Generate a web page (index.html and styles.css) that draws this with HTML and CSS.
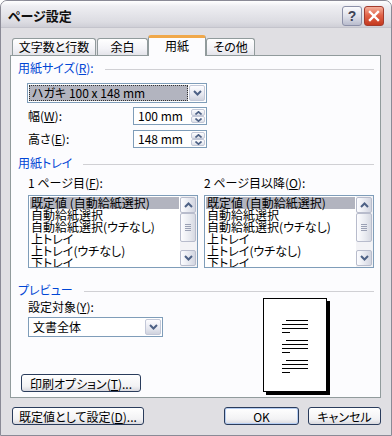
FILE: index.html
```html
<!DOCTYPE html>
<html lang="ja">
<head>
    <meta charset="UTF-8">
    <title>ページ設定</title>
    <link rel="stylesheet" href="styles.css">
</head>
<body>
    <div class="window">
        <div class="titlebar">
            <span class="title">ページ設定</span>
            <div class="title-buttons">
                <span class="tb-btn help">?</span>
                <span class="tb-btn close">
                    <svg width="12" height="12" viewBox="0 0 12 12"><path d="M2 2 L10 10 M10 2 L2 10" stroke="#fff" stroke-width="2.4" stroke-linecap="square"/></svg>
                </span>
            </div>
        </div>

        <div class="client">
            <div class="tabs">
                <div class="tab tab-chars">文字数と行数</div>
                <div class="tab tab-margin">余白</div>
                <div class="tab tab-paper active">用紙</div>
                <div class="tab tab-other">その他</div>
            </div>

            <div class="page">
                <div class="group-title"><span>用紙サイズ(<u>R</u>):</span><i></i></div>

                <div class="combo combo-size">
                    <div class="combo-text selected">ハガキ 100 x 148 mm</div>
                    <div class="drop-btn"><svg width="9" height="6" viewBox="0 0 9 6"><path d="M1 1 L4.5 4.5 L8 1" fill="none" stroke="#4d6185" stroke-width="2"/></svg></div>
                </div>

                <div class="field-row first">
                    <label class="field-label">幅(<u>W</u>):</label>
                    <div class="spin">
                        <div class="spin-value">100 mm</div>
                        <div class="spin-btns">
                            <span class="spin-btn"><svg width="7" height="4" viewBox="0 0 7 4"><path d="M0.5 3.5 L3.5 0.8 L6.5 3.5" fill="none" stroke="#4d6185" stroke-width="1.6"/></svg></span>
                            <span class="spin-btn"><svg width="7" height="4" viewBox="0 0 7 4"><path d="M0.5 0.5 L3.5 3.2 L6.5 0.5" fill="none" stroke="#4d6185" stroke-width="1.6"/></svg></span>
                        </div>
                    </div>
                </div>

                <div class="field-row">
                    <label class="field-label">高さ(<u>E</u>):</label>
                    <div class="spin">
                        <div class="spin-value">148 mm</div>
                        <div class="spin-btns">
                            <span class="spin-btn"><svg width="7" height="4" viewBox="0 0 7 4"><path d="M0.5 3.5 L3.5 0.8 L6.5 3.5" fill="none" stroke="#4d6185" stroke-width="1.6"/></svg></span>
                            <span class="spin-btn"><svg width="7" height="4" viewBox="0 0 7 4"><path d="M0.5 0.5 L3.5 3.2 L6.5 0.5" fill="none" stroke="#4d6185" stroke-width="1.6"/></svg></span>
                        </div>
                    </div>
                </div>

                <div class="group-title tray"><span>用紙トレイ</span><i></i></div>

                <div class="trays">
                    <div class="tray-col">
                        <div class="tray-label">1 ページ目(<u>F</u>):</div>
                        <div class="listbox">
                            <div class="list-items">
                                <div class="list-item selected">既定値 (自動給紙選択)</div>
                                <div class="list-item">自動給紙選択</div>
                                <div class="list-item">自動給紙選択(ウチなし)</div>
                                <div class="list-item">上トレイ</div>
                                <div class="list-item">上トレイ(ウチなし)</div>
                                <div class="list-item">下トレイ</div>
                            </div>
                            <div class="scrollbar">
                                <span class="sb-btn"><svg width="9" height="6" viewBox="0 0 9 6"><path d="M1 5 L4.5 1.5 L8 5" fill="none" stroke="#4d6185" stroke-width="2"/></svg></span>
                                <span class="sb-thumb"><i></i><i></i><i></i><i></i></span>
                                <span class="sb-track"></span>
                                <span class="sb-btn"><svg width="9" height="6" viewBox="0 0 9 6"><path d="M1 1 L4.5 4.5 L8 1" fill="none" stroke="#4d6185" stroke-width="2"/></svg></span>
                            </div>
                        </div>
                    </div>
                    <div class="tray-col">
                        <div class="tray-label">2 ページ目以降(<u>O</u>):</div>
                        <div class="listbox">
                            <div class="list-items">
                                <div class="list-item selected">既定値 (自動給紙選択)</div>
                                <div class="list-item">自動給紙選択</div>
                                <div class="list-item">自動給紙選択(ウチなし)</div>
                                <div class="list-item">上トレイ</div>
                                <div class="list-item">上トレイ(ウチなし)</div>
                                <div class="list-item">下トレイ</div>
                            </div>
                            <div class="scrollbar">
                                <span class="sb-btn"><svg width="9" height="6" viewBox="0 0 9 6"><path d="M1 5 L4.5 1.5 L8 5" fill="none" stroke="#4d6185" stroke-width="2"/></svg></span>
                                <span class="sb-thumb"><i></i><i></i><i></i><i></i></span>
                                <span class="sb-track"></span>
                                <span class="sb-btn"><svg width="9" height="6" viewBox="0 0 9 6"><path d="M1 1 L4.5 4.5 L8 1" fill="none" stroke="#4d6185" stroke-width="2"/></svg></span>
                            </div>
                        </div>
                    </div>
                </div>

                <div class="group-title preview-title"><span>プレビュー</span><i></i></div>

                <div class="preview">
                    <div class="preview-left">
                        <div class="apply-label">設定対象(<u>Y</u>):</div>
                        <div class="combo combo-apply">
                            <div class="combo-text">文書全体</div>
                            <div class="drop-btn"><svg width="9" height="6" viewBox="0 0 9 6"><path d="M1 1 L4.5 4.5 L8 1" fill="none" stroke="#4d6185" stroke-width="2"/></svg></div>
                        </div>
                        <button class="btn btn-print">印刷オプション(<u>T</u>)...</button>
                    </div>
                    <div class="sheet">
                        <svg width="62" height="92" viewBox="0 0 62 92">
                            <g fill="#000">
                                <rect x="22" y="21" width="22" height="1"/>
                                <rect x="18" y="25" width="26" height="1"/>
                                <rect x="18" y="29" width="26" height="1"/>
                                <rect x="18" y="33" width="8" height="1"/>
                                <rect x="22" y="41" width="22" height="1"/>
                                <rect x="18" y="45" width="26" height="1"/>
                                <rect x="18" y="49" width="26" height="1"/>
                                <rect x="18" y="53" width="8" height="1"/>
                                <rect x="22" y="61" width="22" height="1"/>
                                <rect x="18" y="65" width="26" height="1"/>
                                <rect x="18" y="69" width="26" height="1"/>
                                <rect x="18" y="73" width="8" height="1"/>
                            </g>
                        </svg>
                    </div>
                </div>
            </div>

            <div class="footer">
                <button class="btn btn-default">既定値として設定(<u>D</u>)...</button>
                <button class="btn btn-ok">OK</button>
                <button class="btn btn-cancel">キャンセル</button>
            </div>
        </div>
    </div>
</body>
</html>
```

FILE: styles.css
```css
* {
    margin: 0;
    padding: 0;
    box-sizing: border-box;
}

body {
    font-family: "Noto Sans CJK JP", sans-serif;
    font-size: 12px;
    font-feature-settings: "palt";
    color: #000;
    background: #fff;
}

.window {
    width: 392px;
    height: 436px;
    border: 1px solid #8a8a96;
    border-radius: 7px 7px 0 0;
    background: #e0dfe3;
    display: flex;
    flex-direction: column;
    overflow: hidden;
}

/* title bar */
.titlebar {
    height: 27px;
    flex: none;
    display: flex;
    align-items: center;
    justify-content: space-between;
    padding: 4px 7px 0 7px;
    background: linear-gradient(#ffffff, #eeeef2 20%, #dcdce2 80%, #cfcfd7);
    border-bottom: 1px solid #c4c4cc;
}

.title {
    font-weight: bold;
    font-size: 13px;
    line-height: 16px;
    color: #111;
}

.title-buttons {
    display: flex;
    gap: 2px;
}

.tb-btn {
    width: 20px;
    height: 20px;
    border-radius: 3px;
    display: flex;
    align-items: center;
    justify-content: center;
}

.help {
    border: 1px solid #8c90a8;
    background: linear-gradient(#fbfbfd, #dcdee8 55%, #b9bccd);
    font-family: "Liberation Sans", sans-serif;
    font-weight: bold;
    font-size: 14px;
    color: #3e4256;
}

.close {
    border: 1px solid #a33a2c;
    background: linear-gradient(#f4b09c, #e2644a 45%, #c4381e);
}

/* client area */
.client {
    flex: 1;
    padding: 7px 10px 0 9px;
    display: flex;
    flex-direction: column;
}

.tabs {
    display: flex;
    align-items: flex-end;
    height: 21px;
    padding-left: 2px;
    margin-bottom: -1px;
    position: relative;
    z-index: 1;
}

.tab {
    height: 17px;
    margin-bottom: 1px;
    border: 1px solid #919b9c;
    border-bottom: none;
    border-radius: 3px 3px 0 0;
    background: linear-gradient(#ffffff, #f3f3f7 60%, #e4e4ea);
    text-align: center;
    line-height: 16px;
}

.tab-chars {
    width: 84px;
    margin-right: 1px;
}

.tab-margin {
    width: 51px;
}

.tab-paper {
    width: 58px;
}

.tab-other {
    width: 49px;
}

.tab.active {
    height: 21px;
    margin-bottom: 0;
    background: #fcfcfe;
    border-top: 3px solid #f0a84a;
    line-height: 15px;
}

.page {
    height: 343px;
    flex: none;
    border: 1px solid #919b9c;
    background: #fcfcfe;
    padding: 0 6px 0 7px;
}

/* group titles */
.group-title {
    display: flex;
    align-items: center;
    gap: 11px;
    margin-top: 6px;
    height: 12px;
    line-height: 12px;
    color: #0046d5;
}

.group-title i {
    flex: 1;
    height: 1px;
    margin-top: 3px;
    background: #d0d0d4;
}

.group-title.tray {
    margin-top: 9px;
}

.group-title.preview-title {
    margin-top: 16px;
}

/* combo boxes */
.combo {
    display: flex;
    height: 20px;
    border: 1px solid #7f9db9;
    background: #fff;
    padding: 1px;
}

.combo-size {
    width: 180px;
    margin: 9px 0 0 9px;
}

.combo-text {
    flex: 1;
    line-height: 16px;
    padding-left: 3px;
    margin-right: 1px;
    white-space: nowrap;
}

.combo-text.selected {
    background: #b2b4bf;
    outline: 1px dotted #333;
    outline-offset: -1px;
}

.drop-btn {
    width: 16px;
    border: 1px solid #c3c8d8;
    border-radius: 2px;
    background: linear-gradient(#fdfdff, #e6e8f0 60%, #d0d3de);
    display: flex;
    align-items: center;
    justify-content: center;
}

/* width / height fields */
.field-row {
    display: flex;
    align-items: center;
    margin: 5px 0 0 10px;
}

.field-row.first {
    margin-top: 4px;
}

.field-label {
    width: 105px;
    line-height: 12px;
}

.spin {
    width: 74px;
    height: 18px;
    display: flex;
    border: 1px solid #7f9db9;
    background: #fff;
}

.spin-value {
    flex: 1;
    line-height: 16px;
    padding-left: 4px;
}

.spin-btns {
    width: 15px;
    padding: 1px 1px 1px 0;
    display: flex;
    flex-direction: column;
}

.spin-btn {
    flex: 1;
    border: 1px solid #c3c8d8;
    border-radius: 2px;
    background: linear-gradient(#fdfdff, #dfe2ea);
    display: flex;
    align-items: center;
    justify-content: center;
}

/* tray lists */
.trays {
    display: flex;
    gap: 6px;
    margin: 8px 0 0 10px;
}

.tray-col {
    width: 170px;
}

.tray-label {
    line-height: 12px;
    height: 12px;
}

.listbox {
    margin-top: 6px;
    height: 73px;
    display: flex;
    border: 1px solid #7f9db9;
    background: #fff;
}

.list-items {
    flex: 1;
    padding: 1px 1px 0 1px;
    overflow: hidden;
}

.list-item {
    height: 12px;
    line-height: 12px;
    padding-left: 1px;
    white-space: nowrap;
}

.list-item.selected {
    background: #b2b4bf;
}

.scrollbar {
    width: 17px;
    padding: 1px 1px 1px 0;
    display: flex;
    flex-direction: column;
    background: #f3f3f6;
}

.sb-btn {
    height: 16px;
    border: 1px solid #b8bccc;
    border-radius: 2px;
    background: linear-gradient(90deg, #fdfdff, #e4e6ee 60%, #d2d5e0);
    display: flex;
    align-items: center;
    justify-content: center;
}

.sb-thumb {
    height: 29px;
    border: 1px solid #b8bccc;
    border-radius: 2px;
    background: linear-gradient(90deg, #fdfdff, #e8eaf0 60%, #d6d9e2);
    display: flex;
    flex-direction: column;
    align-items: center;
    justify-content: center;
    gap: 1px;
}

.sb-thumb i {
    width: 6px;
    height: 1px;
    background: #9aa0b4;
}

.sb-track {
    flex: 1;
}

/* preview */
.preview {
    display: flex;
    margin-left: 3px;
}

.preview-left {
    width: 142px;
    display: flex;
    flex-direction: column;
    align-items: flex-start;
}

.apply-label {
    margin: 5px 0 0 7px;
    line-height: 12px;
}

.combo-apply {
    width: 135px;
    margin: 4px 0 0 7px;
}

.sheet {
    width: 64px;
    height: 94px;
    margin: 2px 0 0 100px;
    border: 1px solid #000;
    background: #fff;
    box-shadow: 3px 3px 0 #000;
}

.sheet svg {
    display: block;
}

/* push buttons */
.btn {
    height: 18px;
    border: 1px solid #2a3c5c;
    border-radius: 3px;
    background: linear-gradient(#ffffff, #f2f2f4 70%, #d8d8de);
    font-family: "Noto Sans CJK JP", sans-serif;
    font-size: 12px;
    font-feature-settings: "palt";
    line-height: 15px;
    color: #000;
    text-align: center;
}

.btn-print {
    width: 120px;
    margin-top: 37px;
}

.footer {
    display: flex;
    margin-top: 9px;
    padding-left: 2px;
}

.btn-default {
    width: 132px;
}

.btn-ok {
    width: 75px;
    margin-left: auto;
    box-shadow: inset 0 0 0 1px #b6cdf2;
}

.btn-cancel {
    width: 73px;
    margin-left: 9px;
}
```
